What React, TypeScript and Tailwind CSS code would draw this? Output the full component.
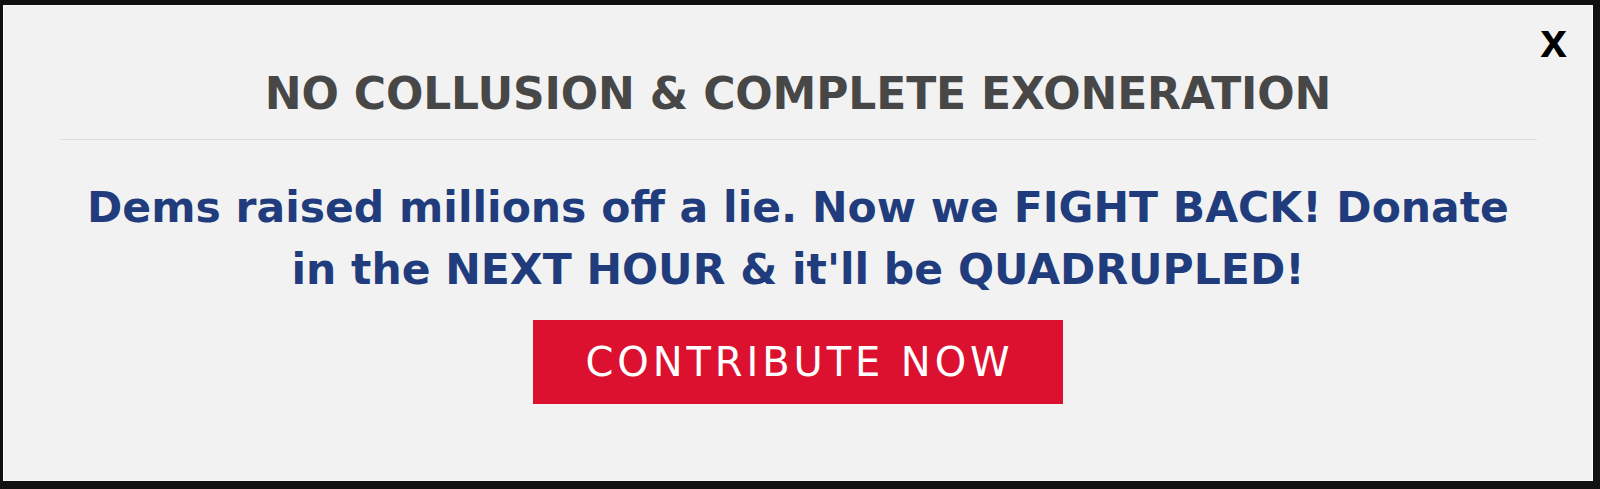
import React from 'react'

const App = () => {
  return (
    <div className="w-[1600px] h-[489px] bg-[#111111] pl-[3px] pt-[5px] overflow-hidden">
      {/* Modal */}
      <div className="relative w-[1590px] h-[476px] bg-[#f2f2f2] border border-[#fafafa] pt-[66px]">
        <button
          className="absolute top-[11px] right-[25px] text-[48px] leading-[48px] font-bold text-black"
          style={{ fontFamily: '"Liberation Sans", Arial, sans-serif' }}
        >
          x
        </button>

        <h2
          className="text-center text-[44px] leading-[44px] font-bold tracking-[-0.15px] text-[#474747]"
          style={{ fontFamily: '"DejaVu Sans", sans-serif' }}
        >
          NO COLLUSION &amp; COMPLETE EXONERATION
        </h2>

        <div className="ml-[57px] mr-[55px] mt-[23px] h-px bg-[#dddddd]" />

        <p
          className="mx-auto mt-[37px] w-[1440px] text-center text-[42.5px] leading-[62px] font-bold text-[#213c7c]"
          style={{ fontFamily: '"DejaVu Sans", sans-serif' }}
        >
          Dems raised millions off a lie. Now we FIGHT BACK! Donate in the NEXT HOUR &amp; it'll be QUADRUPLED!
        </p>

        <div className="mt-[19px] flex justify-center">
          <a
            href="#"
            className="flex h-[84px] items-center bg-[#dc1130] pl-[52px] pr-[49px] text-[40px] leading-[40px] tracking-[3.9px] text-white"
            style={{ fontFamily: '"DejaVu Sans", sans-serif' }}
          >
            CONTRIBUTE NOW
          </a>
        </div>
      </div>
    </div>
  )
}

export default App
